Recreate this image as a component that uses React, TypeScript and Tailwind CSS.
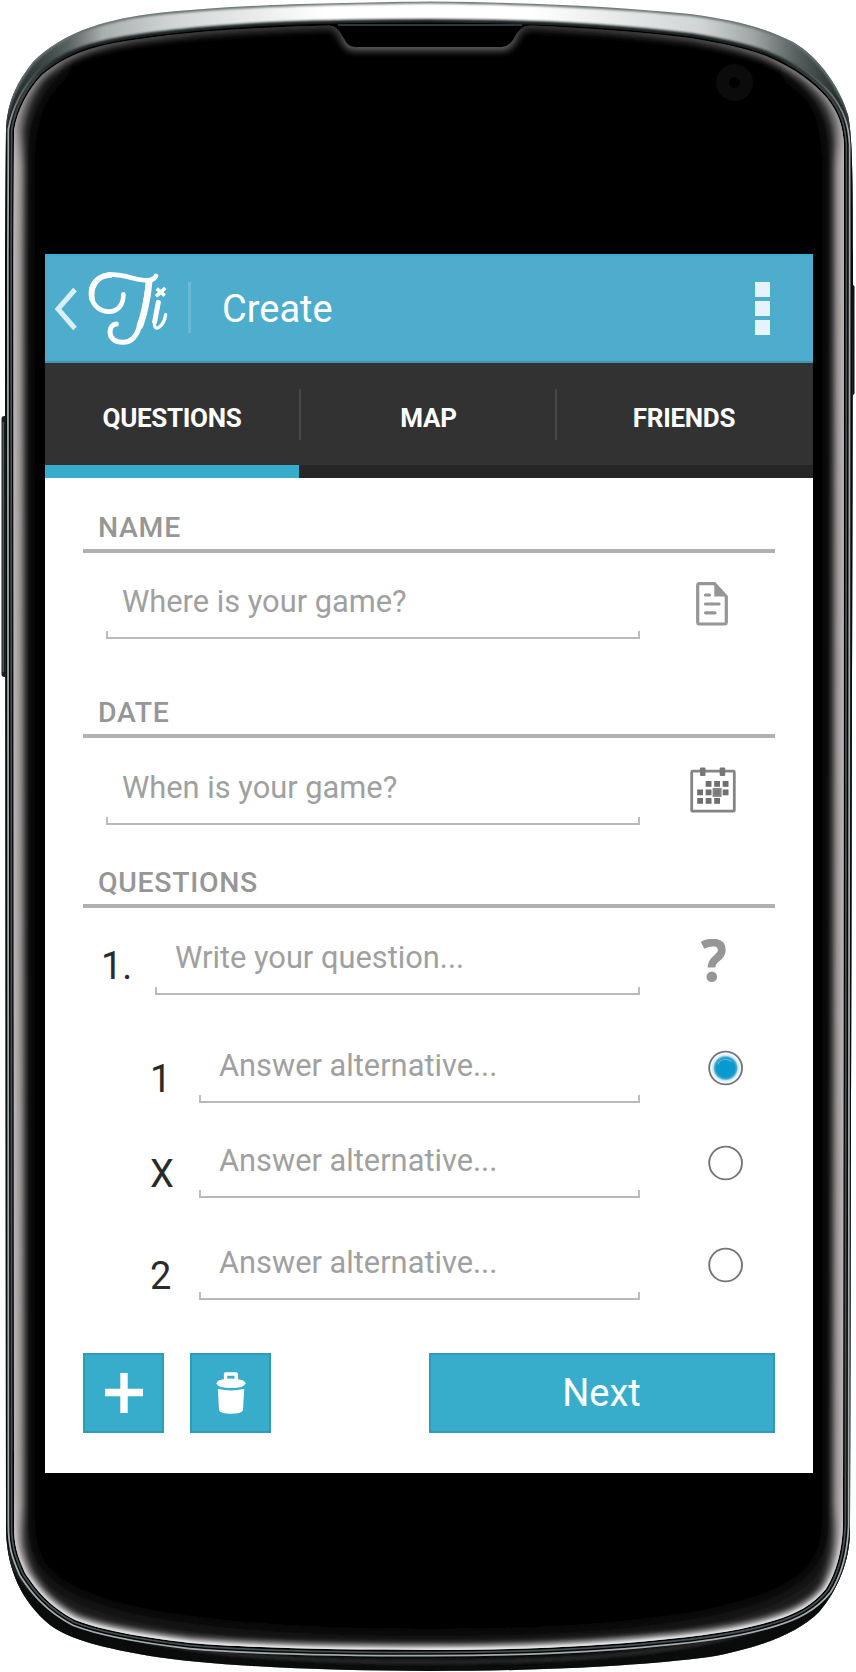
import React from "react";

const OUTER_SHAPE =
  "M5 260 L6 127 C8 100 17 82 33 62 C49 46 66 37 83 30 C104 22 126 17 150 14 C220 6 300 3 430 1.5 C530 2.5 610 6 690 14 C735 20 765 28 793 42 C820 58 840 88 848 115 C852 135 853 165 853 260 L850 1530 C850 1560 838 1590 819 1612 C798 1633 760 1648 709 1657 C640 1666 540 1671 430 1671 C330 1671 210 1666 150 1656 C105 1648 70 1640 50 1625 C22 1602 7 1570 6 1530 Z";

const FACE =
  "M13.5 260 L14 130 C18 108 28 90 42 75 C60 60 75 54 90 49 C120 40 160 36 200 32 C250 28 290 26.5 328 25.5 C338 25 341 34 346 42 Q349 47 356 47 L502 47 Q509 46 513 40 C518 31 521 25.5 531 25.5 C590 28 640 32 690 38 C720 43 745 48 766 56 C795 68 815 84 827 98 C838 112 843 125 844 145 L844 260 L843 1525 C842 1552 836 1573 826 1589 C812 1606 795 1614 776 1620 C745 1630 705 1636 659 1640 C590 1647 510 1650 430 1650 C340 1650 250 1648 190 1643 C140 1637 100 1630 75 1620 C50 1607 36 1590 25 1573 C17 1555 14 1545 14 1525 Z";

const FACE_NO_NOTCH =
  "M13.5 260 L14 130 C18 108 28 90 42 75 C60 60 75 54 90 49 C120 40 160 36 200 32 C250 28 290 24.5 430 24 C570 24.5 640 32 690 38 C720 43 745 48 766 56 C795 68 815 84 827 98 C838 112 843 125 844 145 L844 260 L843 1525 C842 1552 836 1573 826 1589 C812 1606 795 1614 776 1620 C745 1630 705 1636 659 1640 C590 1647 510 1650 430 1650 C340 1650 250 1648 190 1643 C140 1637 100 1630 75 1620 C50 1607 36 1590 25 1573 C17 1555 14 1545 14 1525 Z";

function PhoneBody() {
  return (
    <svg className="absolute inset-0" width="856" height="1672" viewBox="0 0 856 1672" aria-hidden="true">
      <defs>
        <clipPath id="outer">
          <path d={OUTER_SHAPE} />
        </clipPath>
        <clipPath id="face">
          <path d={FACE} />
        </clipPath>
        <linearGradient id="chrome" gradientUnits="userSpaceOnUse" x1="0" y1="0" x2="856" y2="0">
          <stop offset="0" stopColor="#1c2323" />
          <stop offset="0.05" stopColor="#3a4544" />
          <stop offset="0.08" stopColor="#596361" />
          <stop offset="0.12" stopColor="#a9aeae" />
          <stop offset="0.2" stopColor="#d0d4d4" />
          <stop offset="0.38" stopColor="#ffffff" />
          <stop offset="0.62" stopColor="#ffffff" />
          <stop offset="0.82" stopColor="#d0d4d4" />
          <stop offset="0.88" stopColor="#a0a5a5" />
          <stop offset="0.93" stopColor="#566160" />
          <stop offset="0.97" stopColor="#2e3938" />
          <stop offset="1" stopColor="#1c2323" />
        </linearGradient>
        <linearGradient id="lower" gradientUnits="userSpaceOnUse" x1="0" y1="90" x2="0" y2="150">
          <stop offset="0" stopColor="#0a0c0c" stopOpacity="0" />
          <stop offset="1" stopColor="#0a0c0c" />
        </linearGradient>
        <linearGradient id="rim" gradientUnits="userSpaceOnUse" x1="0" y1="60" x2="0" y2="130">
          <stop offset="0" stopColor="#a4abad" stopOpacity="0" />
          <stop offset="1" stopColor="#a4abad" />
        </linearGradient>
        <linearGradient id="rimDark" gradientUnits="userSpaceOnUse" x1="0" y1="60" x2="0" y2="130">
          <stop offset="0" stopColor="#060808" stopOpacity="0" />
          <stop offset="1" stopColor="#060808" />
        </linearGradient>
        <linearGradient id="rimMid" gradientUnits="userSpaceOnUse" x1="0" y1="60" x2="0" y2="130">
          <stop offset="0" stopColor="#465052" stopOpacity="0" />
          <stop offset="1" stopColor="#465052" />
        </linearGradient>
        <linearGradient id="sideGlow" gradientUnits="userSpaceOnUse" x1="0" y1="0" x2="0" y2="1672">
          <stop offset="0.05" stopColor="#8f8c8c" stopOpacity="0" />
          <stop offset="0.1" stopColor="#8f8c8c" />
          <stop offset="0.9" stopColor="#8f8c8c" />
          <stop offset="0.95" stopColor="#8f8c8c" stopOpacity="0" />
        </linearGradient>
        <linearGradient id="edgeGlow" gradientUnits="userSpaceOnUse" x1="0" y1="24" x2="0" y2="1650">
          <stop offset="0" stopColor="#2e2d2d" />
          <stop offset="0.01" stopColor="#454343" />
          <stop offset="0.025" stopColor="#706d6d" />
          <stop offset="0.05" stopColor="#8f8c8c" />
          <stop offset="0.08" stopColor="#b6b3b3" />
          <stop offset="0.9" stopColor="#b6b3b3" />
          <stop offset="1" stopColor="#ececec" />
        </linearGradient>
        <filter id="soft" filterUnits="userSpaceOnUse" x="0" y="0" width="856" height="1672">
          <feGaussianBlur stdDeviation="3.2" />
        </filter>
        <filter id="softer" filterUnits="userSpaceOnUse" x="0" y="0" width="856" height="1672">
          <feGaussianBlur stdDeviation="8" />
        </filter>
        <filter id="slight" filterUnits="userSpaceOnUse" x="0" y="0" width="856" height="1672">
          <feGaussianBlur stdDeviation="1.2" />
        </filter>
      </defs>

      <rect x="1.5" y="416" width="8" height="261" rx="3" fill="#18201f" />
      <rect x="2.5" y="422" width="1.5" height="250" fill="#4a5755" />
      <rect x="850" y="285" width="4.5" height="110" rx="2" fill="#111515" />

      <path d={OUTER_SHAPE} fill="url(#chrome)" />
      <g clipPath="url(#outer)">
        <path d={OUTER_SHAPE} fill="none" stroke="#687270" strokeWidth="4" filter="url(#slight)" />
        <path d={FACE_NO_NOTCH} fill="none" stroke="#1a2322" strokeWidth="10" filter="url(#slight)" />
        <rect x="0" y="90" width="856" height="1582" fill="url(#lower)" />
        <path
          d="M8 1550 C30 1640 200 1662 430 1662 C660 1662 830 1640 848 1550"
          fill="none"
          stroke="#242323"
          strokeWidth="5"
          filter="url(#slight)"
        />
        <path d={FACE_NO_NOTCH} fill="none" stroke="url(#rim)" strokeWidth="13" />
        <path d={FACE_NO_NOTCH} fill="none" stroke="url(#rimDark)" strokeWidth="9.5" />
        <path d={FACE_NO_NOTCH} fill="none" stroke="url(#rimMid)" strokeWidth="6.5" />
        <path d={FACE_NO_NOTCH} fill="#000" stroke="#000" strokeWidth="3" />
        <path d="M338 25 H522" stroke="#2c3838" strokeWidth="2" />
      </g>

      <path d={FACE} fill="#000" />
      <g clipPath="url(#face)">
        <path
          d="M60 56 C30 80 14 110 14 160 V1525 C16 1590 50 1650 430 1650 C800 1650 840 1590 843 1525 V160 C842 112 828 80 790 62"
          fill="none"
          stroke="#1a1f1f"
          strokeWidth="28"
          filter="url(#softer)"
        />
        <path d={FACE} fill="none" stroke="url(#sideGlow)" strokeWidth="21" filter="url(#soft)" />
        <path d={FACE} fill="none" stroke="url(#edgeGlow)" strokeWidth="9" filter="url(#soft)" />
        <path d={FACE} fill="none" stroke="url(#edgeGlow)" strokeWidth="3" filter="url(#slight)" />
      </g>

      <circle cx="734.5" cy="82.5" r="18.5" fill="#0b0b0b" />
      <circle cx="734.5" cy="82.5" r="5.5" fill="#000" />
    </svg>
  );
}

function BackIcon() {
  return (
    <svg width="24" height="44" viewBox="0 0 24 44" fill="none" aria-hidden="true">
      <path d="M21 2.5 L4 22 L21 41.5" stroke="#d9eff7" strokeWidth="5" />
    </svg>
  );
}

function Logo() {
  return (
    <svg width="80" height="76" viewBox="144 76 240 228" fill="none" stroke="#fff" strokeLinecap="round" strokeLinejoin="round" aria-hidden="true">
      <path d="M250 146 C251 178 232 199 205 198 C172 197 152 170 153 138 C155 106 182 87 218 87 C258 87 288 104 322 104 C336 104 344 98 348 91" strokeWidth="14" />
      <path d="M156 160 C150 120 172 90 210 88" strokeWidth="17" />
      <path d="M326 106 C320 165 310 215 294 255 C282 284 264 291 247 290 C224 290 210 277 210 259 C210 246 217 236 229 235" strokeWidth="15" />
      <path d="M327 112 C322 160 313 205 300 240" strokeWidth="20" />
      <path d="M356 170 L345 222 C339 248 350 250 358 244 C369 235 375 221 377 207" strokeWidth="10" />
      <path d="M355 170 L344 228" strokeWidth="15" />
      <path d="M350 129 L374 150 M376 127 L348 152" strokeWidth="11" strokeLinecap="butt" />
    </svg>
  );
}

function DocIcon() {
  return (
    <svg width="32" height="44" viewBox="0 0 32 44" fill="none" stroke="#969696" aria-hidden="true">
      <path d="M3.5 1.7 H18.5 L30.3 14.5 V40 Q30.3 42 28.3 42 H3.7 Q1.7 42 1.7 40 V3.5 Q1.7 1.7 3.5 1.7 Z" strokeWidth="3.2" />
      <path d="M18.3 1.5 V14.5 H31 Z" fill="#969696" stroke="none" />
      <path d="M9.5 13 H13.5 M9.5 22 H23 M9.5 30.8 H19" strokeWidth="3.2" strokeLinecap="round" />
    </svg>
  );
}

const DAYS = [
  [15.7, 14], [24.2, 14], [32.7, 14],
  [7.2, 22.5], [15.7, 22.5], [32.7, 22.5],
  [7.2, 31], [15.7, 31], [24.2, 31],
];

function CalendarIcon() {
  return (
    <svg width="46" height="46" viewBox="0 0 46 46" fill="none" aria-hidden="true">
      <rect x="1.7" y="4.2" width="42.6" height="40" rx="1" stroke="#858585" strokeWidth="2.8" />
      <rect x="10" y="0.5" width="5.5" height="8.5" rx="1" fill="#777" />
      <rect x="29.7" y="0.5" width="5.5" height="8.5" rx="1" fill="#777" />
      {DAYS.map(([x, y]) => (
        <rect key={x + "-" + y} x={x} y={y} width="5.8" height="5.8" fill="#6f6f6f" />
      ))}
      <rect x="22.6" y="20.9" width="9" height="9" fill="#868686" />
      <rect x="24.6" y="22.9" width="5" height="5" fill="#777" />
    </svg>
  );
}

function HelpIcon() {
  return (
    <svg width="26" height="44" viewBox="0 0 26 44" fill="none" aria-hidden="true">
      <path d="M1.5 6.2 C8 2.8 20.5 1.2 20.8 11 C21 19.5 10.5 18.5 10.5 28.5" stroke="#969696" strokeWidth="7.8" />
      <circle cx="10.8" cy="37.7" r="5.3" fill="#969696" />
    </svg>
  );
}

function TrashIcon() {
  return (
    <svg width="30" height="42" viewBox="0 0 30 42" aria-hidden="true">
      <path d="M9.6 8 V2 H20.2 V8" fill="none" stroke="#fff" strokeWidth="3.4" strokeLinejoin="round" />
      <path d="M4 8 Q15 5 26 8 Q29.5 9.5 29.5 11.5 Q28 16 15 16 Q2 16 0.5 11.5 Q0.5 9.5 4 8 Z" fill="#fff" />
      <path d="M1.8 16.8 Q15 20 28.2 16.8 L27 38 Q26.5 41.5 15 41.7 Q3.5 41.5 3 38 Z" fill="#fff" />
    </svg>
  );
}

function Radio({ checked = false }: { checked?: boolean }) {
  return (
    <svg width="36" height="36" viewBox="0 0 36 36" role="radio" aria-checked={checked}>
      <defs>
        <radialGradient id="dot">
          <stop offset="0" stopColor="#0899d0" />
          <stop offset="0.64" stopColor="#0c9ace" />
          <stop offset="0.76" stopColor="#4cabcd" />
          <stop offset="0.86" stopColor="#c5e9f5" />
          <stop offset="1" stopColor="#f2fbfe" />
        </radialGradient>
      </defs>
      <circle cx="17.6" cy="18" r="16.4" fill="#fff" stroke="#767676" strokeWidth="1.9" />
      {checked && <circle cx="17.6" cy="18" r="14.5" fill="url(#dot)" />}
      {checked && <path d="M9.8 14.5 A8.5 8.5 0 0 1 23.6 11.8" fill="none" stroke="#7cc4de" strokeWidth="1.2" opacity="0.7" />}
    </svg>
  );
}

function Field({ text, className }: { text: string; className: string }) {
  return (
    <div className={"flex h-[54px] shrink-0 flex-col border-b-2 border-[#b9b9b9] " + className}>
      <div className="h-[46px] pt-px whitespace-nowrap text-[30.8px] leading-[32px] text-[#a0a0a0]">{text}</div>
      <div className="flex h-1.5 justify-between">
        <span className="w-0.5 bg-[#bdbdbd]" />
        <span className="w-0.5 bg-[#bdbdbd]" />
      </div>
    </div>
  );
}

function SectionTitle({ children, className }: { children: string; className: string }) {
  return (
    <h2 className={"flex items-end border-b-[4px] border-[#b0b0b0] pl-[15px] text-[28.4px] leading-[32px] font-medium tracking-[0.7px] text-[#969696] " + className}>
      {children}
    </h2>
  );
}

function Answer({ label, checked, className }: { label: string; checked?: boolean; className: string }) {
  return (
    <div className={"flex h-[54px] items-start " + className}>
      <span className="mt-[11px] w-[116px] shrink-0 pl-[67px] text-[38px] leading-[38px] text-[#2a2a2a]">{label}</span>
      <Field text="Answer alternative..." className="w-[441px] [&>div:first-child]:pl-5" />
      <span className="mt-[1px] ml-[68px]">
        <Radio checked={checked} />
      </span>
    </div>
  );
}

const BUTTON =
  "flex h-20 items-center justify-center border-2 border-[#2b9dbb] bg-[#38adcb] text-white";

export default function App() {
  return (
    <div className="relative h-[1672px] w-[856px] overflow-hidden bg-white pt-[254px] pl-[45px] font-[Roboto,sans-serif]">
      <PhoneBody />
      <main className="relative flex h-[1219px] w-[768px] flex-col bg-white">
        <header className="flex h-[109px] shrink-0 items-start border-t-2 border-b-2 border-t-[#35b1d1] border-b-[#3f94af] bg-[#4eadcd]">
          <div className="mt-[31px] ml-[9px]">
            <BackIcon />
          </div>
          <div className="mt-[15px] ml-[10px]">
            <Logo />
          </div>
          <div className="mt-[26px] ml-[20px] h-[51px] w-[3px] bg-[#69b9d4]" />
          <h1 className="mt-[34px] ml-[31px] text-[38px] leading-[38px] text-white">Create</h1>
          <div className="mt-[26px] mr-[43px] ml-auto flex flex-col gap-1">
            <span className="size-[15px] bg-[#e6f3f8]" />
            <span className="size-[15px] bg-[#e6f3f8]" />
            <span className="size-[15px] bg-[#e6f3f8]" />
          </div>
        </header>

        <nav className="flex h-[115px] shrink-0 text-[26px] leading-[30px] font-bold text-white">
          <div className="flex w-[254px] flex-col border-b-[13px] border-[#38adcb] bg-[#323232]">
            <span className="mt-[40px] text-center tracking-[-0.3px]">QUESTIONS</span>
          </div>
          <div className="flex w-[257px] border-b-[13px] border-[#262626] bg-[#323232]">
            <span className="mt-[26px] h-[51px] w-0.5 bg-[#484848]" />
            <span className="mt-[40px] grow text-center tracking-[-0.3px]">MAP</span>
          </div>
          <div className="flex w-[257px] border-b-[13px] border-[#262626] bg-[#323232]">
            <span className="-ml-px mt-[26px] h-[51px] w-0.5 bg-[#484848]" />
            <span className="mt-[40px] mr-[2px] grow text-center tracking-[-0.3px]">FRIENDS</span>
          </div>
        </nav>

        <form className="flex w-[768px] flex-col pr-[38px] pl-[38px]">
          <SectionTitle className="h-[75px] pb-[5px]">NAME</SectionTitle>
          <div className="mt-[32px] flex h-[54px] items-start pl-[23px]">
            <Field text="Where is your game?" className="w-[534px] [&>div:first-child]:pl-4" />
            <span className="-mt-[3px] ml-14">
              <DocIcon />
            </span>
          </div>

          <SectionTitle className="mt-[24px] h-[75px] pb-[5px]">DATE</SectionTitle>
          <div className="mt-[33px] flex h-[54px] items-start pl-[23px]">
            <Field text="When is your game?" className="w-[534px] [&>div:first-child]:pl-4" />
            <span className="-mt-1 ml-[50px]">
              <CalendarIcon />
            </span>
          </div>

          <SectionTitle className="mt-[8px] h-[75px] pb-[5px]">QUESTIONS</SectionTitle>
          <div className="mt-[33px] flex h-[54px] items-start">
            <span className="mt-[6px] w-[72px] shrink-0 pl-[18px] text-[38px] leading-[38px] text-[#2a2a2a]">1.</span>
            <Field text="Write your question..." className="w-[485px] [&>div:first-child]:pl-5" />
            <span className="-mt-[2px] ml-[61px]">
              <HelpIcon />
            </span>
          </div>
          <Answer label="1" checked className="mt-[54px]" />
          <Answer label="X" className="mt-[41px]" />
          <Answer label="2" className="mt-[48px]" />

          <div className="mt-[53px] flex w-[692px]">
            <div className={BUTTON + " w-[81px]"}>
              <svg width="38" height="40" viewBox="0 0 38 40" aria-hidden="true">
                <path d="M19 0 V40 M0 19.5 H38" stroke="#fff" strokeWidth="7.4" />
              </svg>
            </div>
            <div className={BUTTON + " ml-[26px] w-[81px]"}>
              <TrashIcon />
            </div>
            <div className={BUTTON + " ml-auto w-[346px] pr-px text-[38px]"}>Next</div>
          </div>
        </form>
      </main>
    </div>
  );
}
